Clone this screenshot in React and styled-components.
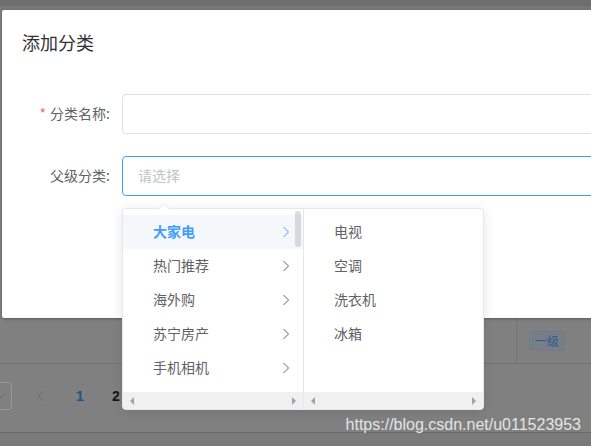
import React from "react";
import styled, { createGlobalStyle } from "styled-components";

const GlobalStyle = createGlobalStyle`
  html, body {
    margin: 0;
    padding: 0;
  }
  body {
    font-family: "Noto Sans CJK SC", "Noto Sans", sans-serif;
  }
`;

const Page = styled.div`
  position: relative;
  width: 591px;
  height: 446px;
  overflow: hidden;
  background: #808080;
  display: flex;
  flex-direction: column;
`;

const TopBar = styled.div`
  flex-shrink: 0;
  height: 6px;
  background: #6e6e6e;
  border-bottom: 4px solid #787878;
`;

const TableRow = styled.div`
  flex-shrink: 0;
  margin-top: 308px;
  height: 45px;
  border-bottom: 1px solid #747474;
  display: flex;
  justify-content: flex-end;
`;

const Cell = styled.div`
  width: 62px;
  border-left: 1px solid #767676;
  padding-left: 12px;
  display: flex;
  align-items: center;
`;

const Tag = styled.span`
  height: 20px;
  box-sizing: border-box;
  padding: 0 5px;
  font-size: 12px;
  line-height: 18px;
  border: 1px solid #707a88;
  background: #787e88;
  color: #2f5a90;
  border-radius: 4px;
`;

const Pagination = styled.div`
  flex-shrink: 0;
  margin-top: 18px;
  height: 28px;
  display: flex;
  align-items: center;
`;

const SizeSelect = styled.div`
  margin-left: -100px;
  width: 112px;
  height: 28px;
  box-sizing: border-box;
  border: 1px solid #979797;
  border-radius: 3px;
  display: flex;
  align-items: center;
  justify-content: flex-end;
  padding-right: 5px;
`;

const PrevBtn = styled.div`
  margin-left: 14px;
  width: 30px;
  display: flex;
  justify-content: center;
`;

const Pager = styled.div`
  margin-left: 6px;
  display: flex;
`;

const PageNum = styled.span`
  width: 36px;
  text-align: center;
  font-family: "Liberation Sans", Arial, sans-serif;
  font-weight: bold;
  font-size: 14px;
  color: ${(p) => (p.$active ? "#23508a" : "#151515")};
`;

const Footer = styled.div`
  flex: 1;
  margin-top: 22px;
  border-top: 1px solid #6a6a6a;
  background: #7a7a7a;
`;

const Dialog = styled.div`
  position: absolute;
  top: 10px;
  left: 2px;
  width: 660px;
  height: 308px;
  background: #fff;
  border-radius: 2px;
  box-shadow: 0 1px 3px rgba(0, 0, 0, 0.3);
`;

const DialogHeader = styled.div`
  padding: 20px 20px 10px;
`;

const Title = styled.div`
  font-size: 18px;
  line-height: 24px;
  color: #303133;
`;

const DialogBody = styled.div`
  padding: 30px 20px;
`;

const FormItem = styled.div`
  display: flex;
  margin-bottom: 22px;
`;

const Label = styled.label`
  width: 100px;
  flex-shrink: 0;
  box-sizing: border-box;
  padding-right: 12px;
  text-align: right;
  line-height: 38px;
  font-size: 14px;
  color: #606266;
`;

const Star = styled.span`
  color: #f56c6c;
  margin-right: 4px;
`;

const Input = styled.div`
  flex: 1;
  height: 40px;
  box-sizing: border-box;
  border: 1px solid ${(p) => (p.$focus ? "#409eff" : "#dcdfe6")};
  border-radius: 4px;
  padding: 0 15px;
  line-height: 36px;
  font-size: 14px;
  color: #c0c4cc;
`;

const Popper = styled.div`
  position: absolute;
  left: 122px;
  top: 208px;
  display: flex;
  background: #fff;
  border: 1px solid #e4e7ed;
  border-radius: 4px;
  box-shadow: 0 2px 12px rgba(0, 0, 0, 0.1);
`;

const Arrow = styled.div`
  position: absolute;
  top: -6px;
  left: 35px;
  width: 0;
  height: 0;
  border-left: 6px solid transparent;
  border-right: 6px solid transparent;
  border-bottom: 6px solid #e4e7ed;
  &::after {
    content: "";
    position: absolute;
    left: -5px;
    top: 1px;
    border-left: 5px solid transparent;
    border-right: 5px solid transparent;
    border-bottom: 5px solid #fff;
  }
`;

const Menu = styled.div`
  position: relative;
  width: 180px;
  height: 200px;
  box-sizing: border-box;
  display: flex;
  flex-direction: column;
  & + & {
    border-left: 1px solid #e4e7ed;
  }
`;

const List = styled.div`
  flex: 1;
  padding: 6px 0;
`;

const Node = styled.div`
  height: 34px;
  box-sizing: border-box;
  padding: 0 13px 2px 30px;
  display: flex;
  align-items: center;
  font-size: 14px;
  color: ${(p) => (p.$active ? "#409eff" : "#606266")};
  font-weight: ${(p) => (p.$active ? "bold" : "normal")};
  background: ${(p) => (p.$active ? "#f5f7fa" : "transparent")};
  svg {
    margin-left: auto;
    margin-top: 2px;
  }
`;

const Thumb = styled.div`
  position: absolute;
  right: 2px;
  top: 2px;
  width: 6px;
  height: 36px;
  border-radius: 3px;
  background: rgba(144, 147, 153, 0.3);
`;

const HScroll = styled.div`
  flex-shrink: 0;
  height: 17px;
  background: #f0f0f0;
  display: flex;
  align-items: center;
  justify-content: space-between;
  padding: 0 7px;
`;

const Tri = styled.span`
  width: 0;
  height: 0;
  border-top: 4px solid transparent;
  border-bottom: 4px solid transparent;
  ${(p) =>
    p.$right
      ? "border-left: 4px solid #a3a3a3;"
      : "border-right: 4px solid #a3a3a3;"}
`;

const Watermark = styled.div`
  position: absolute;
  right: 10px;
  top: 416px;
  font-family: "Liberation Sans", Arial, sans-serif;
  font-size: 16px;
  line-height: 18px;
  color: #e4e4e4;
`;

const Chevron = ({ dir = "right", color }) => {
  const d = {
    right: "M1.5 1 L6.5 6 L1.5 11",
    left: "M6.5 1 L1.5 6 L6.5 11",
    down: "M1 1.5 L6 6.5 L11 1.5",
  }[dir];
  const w = dir === "down" ? 12 : 8;
  const h = dir === "down" ? 8 : 12;
  return (
    <svg width={w} height={h} viewBox={`0 0 ${w} ${h}`}>
      <path d={d} fill="none" stroke={color} strokeWidth="1" />
    </svg>
  );
};

const first = ["大家电", "热门推荐", "海外购", "苏宁房产", "手机相机"];
const second = ["电视", "空调", "洗衣机", "冰箱"];

export default function App() {
  return (
    <>
      <GlobalStyle />
      <Page>
        <TopBar />
        <TableRow>
          <Cell>
            <Tag>一级</Tag>
          </Cell>
        </TableRow>
        <Pagination>
          <SizeSelect>
            <Chevron dir="down" color="#6a6a6a" />
          </SizeSelect>
          <PrevBtn>
            <Chevron dir="left" color="#6a6a6a" />
          </PrevBtn>
          <Pager>
            <PageNum $active>1</PageNum>
            <PageNum>2</PageNum>
          </Pager>
        </Pagination>
        <Footer />

        <Dialog>
          <DialogHeader>
            <Title>添加分类</Title>
          </DialogHeader>
          <DialogBody>
            <FormItem>
              <Label>
                <Star>*</Star>分类名称:
              </Label>
              <Input />
            </FormItem>
            <FormItem>
              <Label>父级分类:</Label>
              <Input $focus>请选择</Input>
            </FormItem>
          </DialogBody>
        </Dialog>

        <Popper>
          <Arrow />
          <Menu>
            <List>
              {first.map((t, i) => (
                <Node key={t} $active={i === 0}>
                  {t}
                  <Chevron color={i === 0 ? "#409eff" : "#606266"} />
                </Node>
              ))}
            </List>
            <Thumb />
            <HScroll>
              <Tri />
              <Tri $right />
            </HScroll>
          </Menu>
          <Menu>
            <List>
              {second.map((t) => (
                <Node key={t}>{t}</Node>
              ))}
            </List>
            <HScroll>
              <Tri />
              <Tri $right />
            </HScroll>
          </Menu>
        </Popper>

        <Watermark>https://blog.csdn.net/u011523953</Watermark>
      </Page>
    </>
  );
}
